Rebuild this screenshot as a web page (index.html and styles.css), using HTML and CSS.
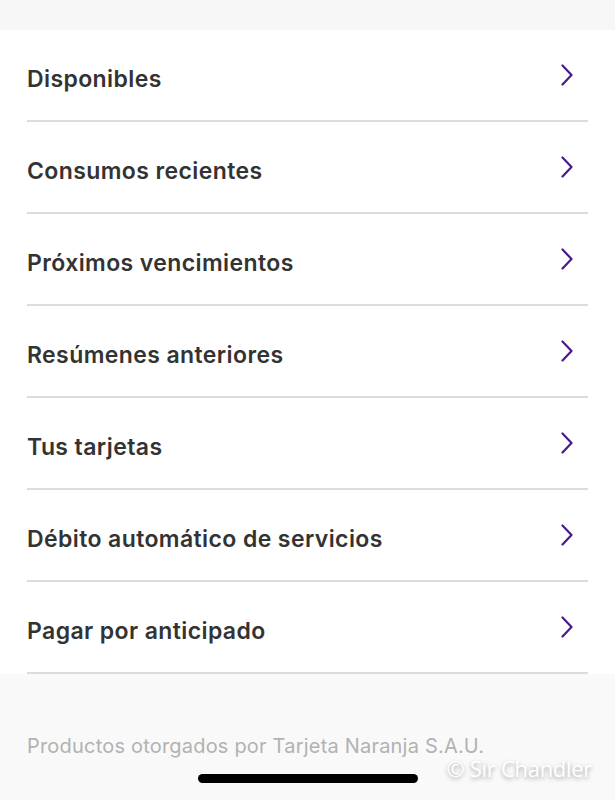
FILE: index.html
```html
<!DOCTYPE html>
<html lang="es">
<head>
  <meta charset="UTF-8" />
  <meta name="viewport" content="width=device-width, initial-scale=1.0"/>
  <title>Tarjeta</title>
  <link rel="stylesheet" href="styles.css">
</head>
<body>

  <div class="top-band"></div>

  <ul class="menu">
    <li class="menu-item">
      <span>Disponibles</span>
      <svg class="chevron" viewBox="0 0 12 22"><path d="M1.5 1.5 L10.5 11 L1.5 20.5" /></svg>
    </li>
    <li class="menu-item">
      <span>Consumos recientes</span>
      <svg class="chevron" viewBox="0 0 12 22"><path d="M1.5 1.5 L10.5 11 L1.5 20.5" /></svg>
    </li>
    <li class="menu-item">
      <span>Próximos vencimientos</span>
      <svg class="chevron" viewBox="0 0 12 22"><path d="M1.5 1.5 L10.5 11 L1.5 20.5" /></svg>
    </li>
    <li class="menu-item">
      <span>Resúmenes anteriores</span>
      <svg class="chevron" viewBox="0 0 12 22"><path d="M1.5 1.5 L10.5 11 L1.5 20.5" /></svg>
    </li>
    <li class="menu-item">
      <span>Tus tarjetas</span>
      <svg class="chevron" viewBox="0 0 12 22"><path d="M1.5 1.5 L10.5 11 L1.5 20.5" /></svg>
    </li>
    <li class="menu-item">
      <span>Débito automático de servicios</span>
      <svg class="chevron" viewBox="0 0 12 22"><path d="M1.5 1.5 L10.5 11 L1.5 20.5" /></svg>
    </li>
    <li class="menu-item">
      <span>Pagar por anticipado</span>
      <svg class="chevron" viewBox="0 0 12 22"><path d="M1.5 1.5 L10.5 11 L1.5 20.5" /></svg>
    </li>
  </ul>

  <footer>
    <p class="legal">Productos otorgados por Tarjeta Naranja S.A.U.</p>
    <div class="home-bar"></div>
    <div class="watermark">© Sir Chandler</div>
  </footer>

</body>
</html>
```

FILE: styles.css
```css
* {
  margin: 0;
  padding: 0;
  box-sizing: border-box;
}

html, body {
  font-family: 'Inter', sans-serif;
  background: #f9f9f9;
  color: #333;
  height: 100%;
  overflow: hidden;
}

body {
  display: flex;
  flex-direction: column;
}

.top-band {
  height: 30px;
  background: #f7f7f7;
}

.menu {
  list-style: none;
  background: #fff;
  padding: 0 27px;
}

.menu-item {
  display: flex;
  align-items: center;
  justify-content: space-between;
  height: 92px;
  padding: 7px 15px 0 0;
  border-bottom: 2px solid #dcdcdc;
  font-size: 23px;
  font-weight: 600;
  letter-spacing: 0.4px;
  color: #333;
}

.chevron {
  width: 12px;
  height: 22px;
  margin-top: -7px;
}

.chevron path {
  fill: none;
  stroke: #4a1a8c;
  stroke-width: 2.2;
  stroke-linecap: round;
  stroke-linejoin: round;
}

footer {
  position: relative;
  flex: 1;
  padding: 60px 27px 0;
}

.legal {
  font-size: 20px;
  font-weight: 400;
  letter-spacing: 0.2px;
  color: #b2b2b2;
}

.home-bar {
  width: 220px;
  height: 9px;
  margin: 16px auto 0;
  background: #000;
  border-radius: 5px;
}

.watermark {
  position: absolute;
  right: 23px;
  top: 79px;
  font-family: 'Open Sans', sans-serif;
  font-size: 22px;
  letter-spacing: -0.3px;
  color: #fff;
  text-shadow: 0 2px 4px rgba(0, 0, 0, 0.35);
}
```
